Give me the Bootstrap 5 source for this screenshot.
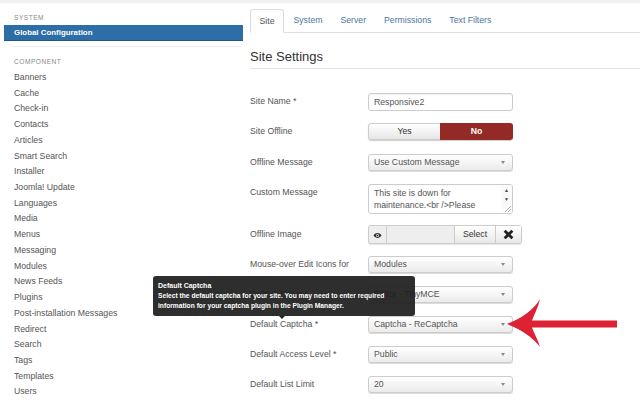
<!DOCTYPE html>
<html lang="en"><head><meta charset="utf-8"><title>Global Configuration</title>
<link href="https://cdn.jsdelivr.net/npm/bootstrap@5.3.0/dist/css/bootstrap.min.css" rel="stylesheet">
<style>
html,body{height:400px;overflow:hidden}
body{font-family:"Liberation Sans",Arial,sans-serif;font-size:8.7px;color:#555;background:#fff;position:relative;border-top:3px solid #f0f0f0}
.shell{height:397px}
.sidecol{width:243px;flex:none;padding:10px 0 0 4px}
.sidehead{font-size:6.6px;letter-spacing:.5px;color:#8a8a8a;line-height:10px;margin-left:10px;height:11px}
.sidesel{background:#2e6ea6;border-bottom:1px solid #1f5585;color:#fff;font-weight:700;font-size:7.9px;height:16px;line-height:15px;padding-left:10px;margin-top:1px}
.siderule{height:1px;background:#eee;margin:5px 1px 10px 10px}
.sidegap{height:2px}
.sidelink{display:block;color:#555;height:15.73px;line-height:15.73px;margin-left:10px;text-decoration:none}
.maincol{padding:6px 0 0 7px;min-width:0}
.tabbar{border-bottom:1px solid #ddd;height:24px}
.tabitem{color:#4a76a2;padding:0 9px;line-height:22px;height:24px;text-decoration:none}
.tabitem.tabon{color:#555;background:#fff;border:1px solid #ddd;border-bottom-color:#fff;border-radius:3px 3px 0 0;padding:0 8.500px;margin-right:.5px}
.pagehead{font-size:13px;color:#333;line-height:16px;margin:16px 0 0;font-weight:400}
.headrule{height:1px;background:#e5e5e5;margin:3px 0 0}
.formbox{padding-top:24px}
.frow{display:flex;align-items:flex-start;height:30px}
.frow.loose{height:30.3px}
.frow.tall{height:42px}
.flabel{width:118px;flex:none;line-height:17px;color:#555}
.inbox,.selbox{width:145px;height:17px;border:1px solid #ccc;border-radius:3px;line-height:15px;padding-left:5px;color:#555;background:#fff}
.inbox{box-shadow:inset 0 1px 1px rgba(0,0,0,.06);height:18px;line-height:16px}
.selbox{background:linear-gradient(#fff,#ebebeb);box-shadow:0 1px 0 #ddd;position:relative}
.selbox::after{content:"";position:absolute;right:7px;top:6px;border:2.500px solid transparent;border-top:3.500px solid #888;border-bottom:0}
.togglewrap{width:145px;height:17px;border-radius:3px;overflow:hidden;box-shadow:0 1px 1px rgba(0,0,0,.2)}
.togyes{width:72px;background:linear-gradient(#fff,#e6e6e6);border:1px solid #ccc;border-right:0;text-align:center;line-height:15px;color:#333;border-radius:3px 0 0 3px}
.togno{width:73px;background:#942a25;color:#fff;text-align:center;font-weight:700;line-height:17px}
.msgbox{width:145px;height:30px;border:1px solid #ccc;border-radius:3px;padding:2.500px 0 0 5px;line-height:12px;overflow:hidden;position:relative;color:#555}
.msgtext{width:125px}
.scrollstrip{position:absolute;right:0;top:0;bottom:0;width:11px;background:#fafafa;color:#444;font-size:5px;text-align:center;line-height:9px;padding-top:1px}
.grip{position:absolute;right:1px;bottom:1px}
.imgctl{height:19px;width:154px;border:1px solid #ccc;border-radius:3px;background:#eee;box-shadow:0 1px 1px rgba(0,0,0,.1);margin-top:-1px}
.imgeye{width:18px;border-right:1px solid #ccc;padding:3px 0 0 4px}
.imgblank{width:67px}
.imgsel{width:41px;border-left:1px solid #ccc;background:linear-gradient(#fff,#e8e8e8);text-align:center;line-height:17px;color:#333}
.imgclr{flex:1;border-left:1px solid #ccc;background:linear-gradient(#fff,#e8e8e8);text-align:center;padding-top:2px}
.tipbox{position:absolute;left:153px;top:273px;width:262px;height:40px;background:rgba(30,30,30,.93);border-radius:3px;color:#fff;font-size:6.700px;font-weight:700;line-height:10px;padding:5px;white-space:nowrap}
.tiptitle{font-size:7px}
.tiparrow{position:absolute;left:126px;bottom:-3px;border:3px solid transparent;border-top:3px solid #242424;border-bottom:0}
.redarrow{position:absolute;left:500px;top:293px}
</style></head>
<body>
<div class="d-flex shell">
  <div class="sidecol">
    <div class="sidehead">SYSTEM</div>
    <div class="sidesel">Global Configuration</div>
    <div class="siderule"></div>
    <div class="sidehead">COMPONENT</div>
    <div class="sidegap"></div>
    <a class="sidelink" href="#">Banners</a><a class="sidelink" href="#">Cache</a><a class="sidelink" href="#">Check-in</a><a class="sidelink" href="#">Contacts</a><a class="sidelink" href="#">Articles</a><a class="sidelink" href="#">Smart Search</a><a class="sidelink" href="#">Installer</a><a class="sidelink" href="#">Joomla! Update</a><a class="sidelink" href="#">Languages</a><a class="sidelink" href="#">Media</a><a class="sidelink" href="#">Menus</a><a class="sidelink" href="#">Messaging</a><a class="sidelink" href="#">Modules</a><a class="sidelink" href="#">News Feeds</a><a class="sidelink" href="#">Plugins</a><a class="sidelink" href="#">Post-installation Messages</a><a class="sidelink" href="#">Redirect</a><a class="sidelink" href="#">Search</a><a class="sidelink" href="#">Tags</a><a class="sidelink" href="#">Templates</a><a class="sidelink" href="#">Users</a>
  </div>
  <div class="maincol flex-grow-1">
    <div class="tabbar d-flex">
      <a class="tabitem tabon" href="#">Site</a><a class="tabitem" href="#">System</a><a class="tabitem" href="#">Server</a><a class="tabitem" href="#">Permissions</a><a class="tabitem" href="#">Text Filters</a>
    </div>
    <h1 class="pagehead">Site Settings</h1>
    <div class="headrule"></div>
    <div class="formbox">
      <div class="frow loose"><div class="flabel">Site Name *</div><div class="inbox">Responsive2</div></div>
      <div class="frow loose"><div class="flabel">Site Offline</div><div class="togglewrap d-flex"><div class="togyes">Yes</div><div class="togno">No</div></div></div>
      <div class="frow loose"><div class="flabel">Offline Message</div><div class="selbox">Use Custom Message</div></div>
      <div class="frow tall"><div class="flabel">Custom Message</div><div class="msgbox"><div class="msgtext">This site is down for maintenance.&lt;br /&gt;Please check back again soon.</div><div class="scrollstrip">▲<br>▼</div><svg class="grip" width="6" height="6" viewBox="0 0 6 6"><path d="M0 6 6 0M3 6 6 3" stroke="#888" stroke-width=".7"/></svg></div></div>
      <div class="frow"><div class="flabel">Offline Image</div><div class="imgctl d-flex"><div class="imgeye"><svg width="9" height="7" viewBox="0 0 18 12"><path d="M1 6c4-6.500 12-6.500 16 0-4 6.500-12 6.500-16 0z" fill="#333"/><circle cx="9" cy="6" r="3" fill="#eee"/><circle cx="9" cy="6" r="1.700" fill="#333"/></svg></div><div class="imgblank"></div><div class="imgsel">Select</div><div class="imgclr"><svg width="11" height="11" viewBox="0 0 10 10"><path d="M1.500 1.500l7 7M8.500 1.500l-7 7" stroke="#222" stroke-width="2.600"/></svg></div></div></div>
      <div class="frow"><div class="flabel">Mouse-over Edit Icons for</div><div class="selbox">Modules</div></div>
      <div class="frow"><div class="flabel">Default Editor *</div><div class="selbox">Editor - TinyMCE</div></div>
      <div class="frow"><div class="flabel">Default Captcha *</div><div class="selbox">Captcha - ReCaptcha</div></div>
      <div class="frow"><div class="flabel">Default Access Level *</div><div class="selbox">Public</div></div>
      <div class="frow"><div class="flabel">Default List Limit</div><div class="selbox">20</div></div>
    </div>
  </div>
</div>
<div class="tipbox"><span class="tiptitle">Default Captcha</span><br>Select the default captcha for your site. You may need to enter required<br>information for your captcha plugin in the Plugin Manager.<span class="tiparrow"></span></div>
<svg class="redarrow" width="120" height="56" viewBox="500 293 120 56"><path d="M507 321C520 316 533 308 540 296C538 305 534 312 532 317.500H617V324.500H532C534 330 538 337 540 344C533 334 520 326 507 321Z" fill="#dd2333"/></svg>
<script src="https://cdn.jsdelivr.net/npm/bootstrap@5.3.0/dist/js/bootstrap.bundle.min.js"></script>
</body></html>
